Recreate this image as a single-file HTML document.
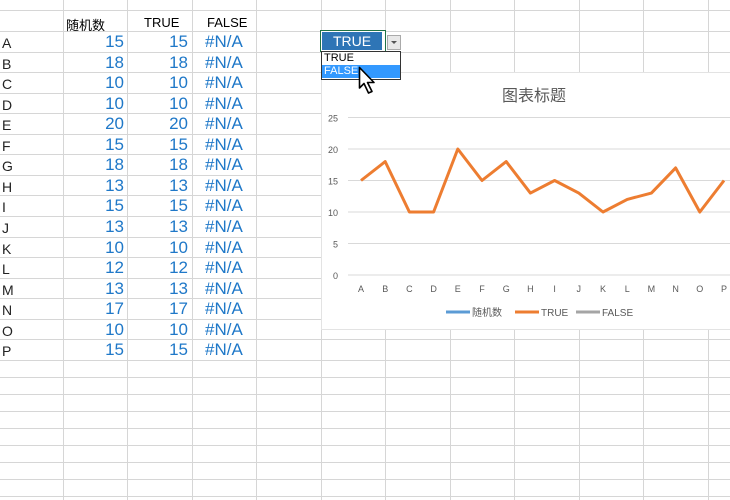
<!DOCTYPE html><html><head><meta charset="utf-8"><style>
body{margin:0;width:730px;height:500px;overflow:hidden;background:#fff;font-family:"Liberation Sans","Noto Sans CJK SC",sans-serif;position:relative}
.t{position:absolute;white-space:nowrap}
.l{font-size:14px;color:#222;left:2px}
.n{font-size:17px;color:#1f78c8;text-align:right}
</style></head><body>
<svg width="730" height="500" style="position:absolute;left:0;top:0">
<g stroke="#d6d6d6" stroke-width="1">
<line x1="63.5" y1="0" x2="63.5" y2="500"/><line x1="127.5" y1="0" x2="127.5" y2="500"/><line x1="192.5" y1="0" x2="192.5" y2="500"/><line x1="256.5" y1="0" x2="256.5" y2="500"/><line x1="321.5" y1="0" x2="321.5" y2="500"/><line x1="385.5" y1="0" x2="385.5" y2="500"/><line x1="450.5" y1="0" x2="450.5" y2="500"/><line x1="514.5" y1="0" x2="514.5" y2="500"/><line x1="579.5" y1="0" x2="579.5" y2="500"/><line x1="643.5" y1="0" x2="643.5" y2="500"/><line x1="708.5" y1="0" x2="708.5" y2="500"/>
<line x1="0" y1="10.5" x2="730" y2="10.5"/>
<g id="rows"></g>
</g></svg>
<script>
var g=document.getElementById('rows'),s='';
for(var k=0;k<=16;k++){var y=Math.round(31+k*20.56)+0.5;s+='<line x1="0" y1="'+y+'" x2="730" y2="'+y+'"/>';}
for(var k=1;k<9;k++){var y=360+k*17+0.5;s+='<line x1="0" y1="'+y+'" x2="730" y2="'+y+'"/>';}
g.innerHTML=s;
</script>
<div class="t" style="left:66px;top:15px;font-size:13px">随机数</div>
<div class="t" style="left:144px;top:15px;font-size:13px">TRUE</div>
<div class="t" style="left:207px;top:15px;font-size:13px">FALSE</div>
<div id="data"></div>
<script>
var L="ABCDEFGHIJKLMNOP",V=[15,18,10,10,20,15,18,13,15,13,10,12,13,17,10,15],h='';
for(var i=0;i<16;i++){var y=31+i*20.56+1;
h+='<div class="t l" style="top:'+(y+3)+'px">'+L[i]+'</div>';
h+='<div class="t n" style="left:64px;width:60px;top:'+y+'px">'+V[i]+'</div>';
h+='<div class="t n" style="left:128px;width:60px;top:'+y+'px">'+V[i]+'</div>';
h+='<div class="t n" style="left:205px;top:'+y+'px;text-align:left">#N/A</div>';}
document.getElementById('data').innerHTML=h;
</script>
<div style="position:absolute;left:321px;top:72px;width:412px;height:258px;background:#fff;border:1px solid #e3e3e3;box-sizing:border-box"></div>
<div class="t" style="left:502px;top:82px;font-size:16px;color:#595959">图表标题</div>
<svg width="730" height="500" style="position:absolute;left:0;top:0" id="ch"></svg>
<script>
var c='',yy=function(v){return 275-v*6.3};
for(var v=0;v<=25;v+=5){var y=yy(v);c+='<line x1="348" y1="'+y+'" x2="730" y2="'+y+'" stroke="#d9d9d9"/>';
c+='<text x="338" y="'+(y+4)+'" font-size="9" fill="#595959" text-anchor="end" font-family="Liberation Sans">'+v+'</text>';}
var p='';for(var i=0;i<16;i++){var x=361+i*24.2;p+=(i?'L':'M')+x+' '+yy(V[i]);
c+='<text x="'+x+'" y="292" font-size="9" fill="#595959" text-anchor="middle" font-family="Liberation Sans">'+L[i]+'</text>';}
c+='<path d="'+p+'" fill="none" stroke="#ed7d31" stroke-width="3" stroke-linejoin="round"/>';
c+='<line x1="446" y1="312" x2="470" y2="312" stroke="#5b9bd5" stroke-width="3"/><text x="472" y="316" font-size="10" fill="#595959" font-family="Liberation Sans,Noto Sans CJK SC">随机数</text>';
c+='<line x1="515" y1="312" x2="539" y2="312" stroke="#ed7d31" stroke-width="3"/><text x="541" y="316" font-size="10" fill="#595959" font-family="Liberation Sans">TRUE</text>';
c+='<line x1="576" y1="312" x2="600" y2="312" stroke="#a5a5a5" stroke-width="3"/><text x="602" y="316" font-size="10" fill="#595959" font-family="Liberation Sans">FALSE</text>';
document.getElementById('ch').innerHTML=c;
</script>
<div style="position:absolute;left:320px;top:30px;width:66px;height:22px;border:1px solid #217346;box-sizing:border-box;background:#fff"></div>
<div class="t" style="left:322px;top:32px;width:60px;height:18px;background:#2e75b6;color:#fff;font-size:14px;text-align:center;line-height:19px">TRUE</div>
<div style="position:absolute;left:387px;top:35px;width:14px;height:15px;background:#e8e8e8;border:1px solid #aaa;box-sizing:border-box"></div>
<div style="position:absolute;left:391px;top:41px;border-left:3px solid transparent;border-right:3px solid transparent;border-top:3px solid #555"></div>
<div style="position:absolute;left:321px;top:51px;width:80px;height:29px;border:1px solid #333;box-sizing:border-box;background:#fff"></div>
<div class="t" style="left:324px;top:52px;font-size:11px;color:#000">TRUE</div>
<div class="t" style="left:322px;top:65px;width:78px;height:13px;background:#3399ff;color:#fff;font-size:11px;line-height:13px;padding-left:2px;box-sizing:border-box">FALSE</div>
<svg width="22" height="30" style="position:absolute;left:358px;top:66px"><path d="M1.5 1.5 L1.5 22 L6 17.5 L10.5 27 L14 25.5 L9.5 16.5 L16 16.5 Z" fill="#fff" stroke="#000" stroke-width="1.6" stroke-linejoin="round"/></svg>
</body></html>
